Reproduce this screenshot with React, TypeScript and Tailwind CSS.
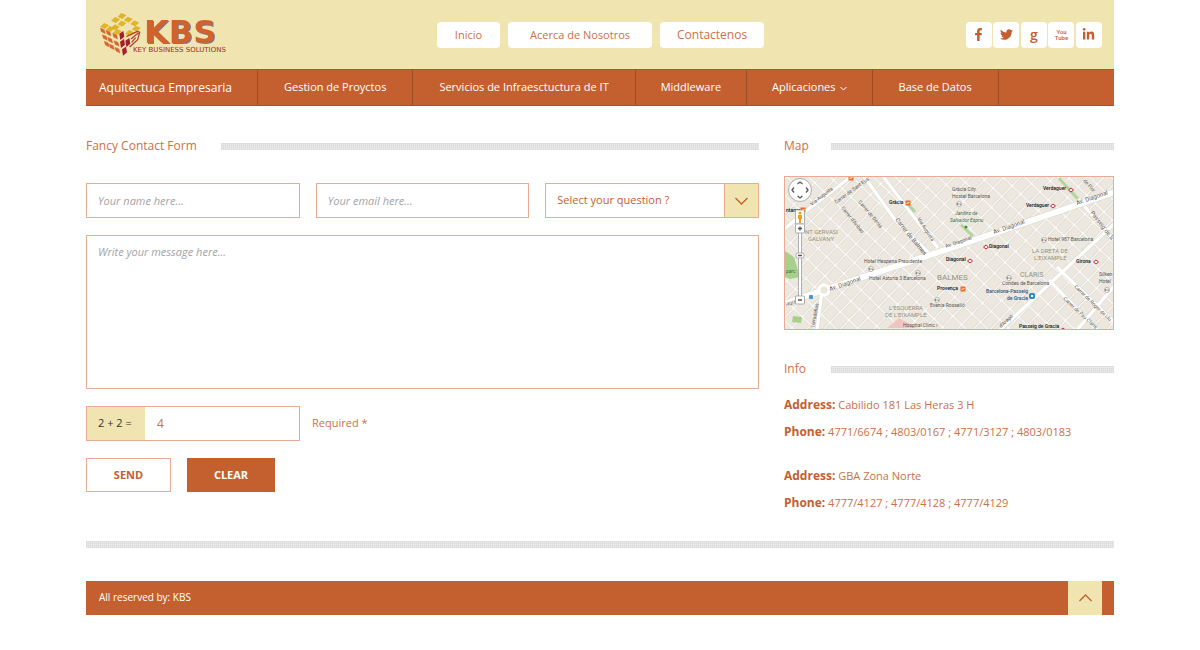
import { useState } from "react";
import type { ReactNode } from "react";
import { FaFacebookF, FaLinkedinIn, FaTwitter } from "react-icons/fa";

const topLinks = [
  { label: "Inicio", size: "px-[18px] text-[11px]" },
  { label: "Acerca de Nosotros", size: "px-[22px] text-[11px]" },
  { label: "Contactenos", size: "px-[17px] text-xs" },
];

const menu = [
  { label: "Aquitectuca Empresaria", size: "pl-[13px] pr-[25px] text-xs" },
  { label: "Gestion de Proyctos", size: "px-[26px] text-[11px]" },
  { label: "Servicios de Infraesctuctura de IT", size: "px-[26px] text-[11px]" },
  { label: "Middleware", size: "px-[25px] text-[11px]" },
  { label: "Aplicaciones", size: "px-[25px] text-[11px]", dropdown: true },
  { label: "Base de Datos", size: "px-[26px] text-[11px]" },
];

const offices = [
  { address: "Cabilido 181 Las Heras 3 H", phone: "4771/6674 ; 4803/0167 ; 4771/3127 ; 4803/0183" },
  { address: "GBA Zona Norte", phone: "4777/4127 ; 4777/4128 ; 4777/4129" },
];

const emptyForm = { name: "", email: "", question: "", message: "", answer: "4" };

export default function App() {
  return (
    <div className="mx-auto max-w-[1028px] bg-white pb-8 font-['Open_Sans',sans-serif] text-[#c4602f]">
      <Header />
      <main className="grid gap-[25px] pt-[30px] md:grid-cols-[1fr_330px]">
        <ContactForm />
        <aside>
          <SectionTitle width="w-[47px]">Map</SectionTitle>
          <div className="mt-5 border border-[#e9ab92]">
            <CityMap />
          </div>
          <div className="mt-[29px]">
            <SectionTitle width="w-[47px]">Info</SectionTitle>
          </div>
          <div className="mt-3 space-y-[17px]">
            {offices.map((office) => (
              <address key={office.address} className="text-[11px] leading-[27px] text-[#cc7047] not-italic">
                <p>
                  <b className="text-xs leading-[27px] text-[#c4602f]">Address:</b> {office.address}
                </p>
                <p>
                  <b className="text-xs leading-[27px] text-[#c4602f]">Phone:</b> {office.phone}
                </p>
              </address>
            ))}
          </div>
        </aside>
      </main>
      <div className="mt-[25px]">
        <DottedBar />
      </div>
      <footer className="mt-[33px] flex h-[34px] justify-between bg-[#c4602f] pr-3 pl-[13px]">
        <p className="text-[10px] leading-8 text-white">All reserved by: KBS</p>
        <a href="#top" aria-label="Back to top" className="flex w-[34px] items-center justify-center bg-[#f0e4b0]">
          <svg width="13" height="8" viewBox="0 0 13 8" fill="none" stroke="#c4602f" strokeWidth="1.3">
            <path d="M.5 7l6-6 6 6" />
          </svg>
        </a>
      </footer>
    </div>
  );
}

function Header() {
  return (
    <header id="top">
      <div className="flex h-[69px] items-center justify-between bg-[#f0e4b0] pr-3 pl-[13px]">
        <Logo />
        <nav className="flex gap-2">
          {topLinks.map((link) => (
            <a
              key={link.label}
              href="#"
              className={`rounded-sm bg-white leading-[26px] text-[#cc7047] ${link.size}`}
            >
              {link.label}
            </a>
          ))}
        </nav>
        <div className="flex w-[136px] justify-between">
          <Social label="Facebook">
            <FaFacebookF size={13} />
          </Social>
          <Social label="Twitter">
            <FaTwitter size={13} />
          </Social>
          <Social label="Google">
            <span className="text-sm leading-none font-semibold">g</span>
          </Social>
          <Social label="YouTube">
            <span className="text-center font-['Roboto',sans-serif] text-[6px] leading-[6px] font-medium">
              You
              <br />
              Tube
            </span>
          </Social>
          <Social label="LinkedIn">
            <FaLinkedinIn size={13} />
          </Social>
        </div>
      </div>
      <nav className="flex h-[37px] border-y border-[#bb4f1c] bg-[#c4602f] text-white">
        {menu.map((item) => (
          <a
            key={item.label}
            href="#"
            className={`flex items-center gap-1 border-r border-[#9c4d27] whitespace-nowrap ${item.size}`}
          >
            {item.label}
            {item.dropdown && (
              <svg className="mt-0.5" width="7" height="5" viewBox="0 0 7 5" fill="none" stroke="currentColor">
                <path d="M.5 1l3 3 3-3" />
              </svg>
            )}
          </a>
        ))}
      </nav>
    </header>
  );
}

function Social({ label, children }: { label: string; children: ReactNode }) {
  return (
    <a
      href="#"
      aria-label={label}
      className="flex size-[26px] items-center justify-center rounded-sm bg-white text-[#c4602f]"
    >
      {children}
    </a>
  );
}

function SectionTitle({ width, children }: { width: string; children: ReactNode }) {
  return (
    <div className="flex items-center">
      <h2 className={`shrink-0 text-xs leading-5 text-[#cc7047] ${width}`}>{children}</h2>
      <DottedBar />
    </div>
  );
}

function DottedBar() {
  return (
    <div className="h-[7px] w-full bg-[#ececec] bg-[linear-gradient(90deg,#d6d6d680_1px,transparent_1px),linear-gradient(#d6d6d680_1px,transparent_1px)] bg-size-[2px_2px]" />
  );
}

function ContactForm() {
  const [form, setForm] = useState(emptyForm);
  const field =
    "border border-[#e9ab92] bg-white px-[11px] text-[11px] text-[#c4602f] outline-none placeholder:text-[#a3a3a3] placeholder:italic";

  return (
    <section>
      <SectionTitle width="w-[135px]">Fancy Contact Form</SectionTitle>
      <form className="mt-[27px] space-y-[17px]" onSubmit={(e) => e.preventDefault()}>
        <div className="grid grid-cols-3 gap-4">
          <input
            aria-label="Your name"
            placeholder="Your name here..."
            className={`h-[35px] w-full ${field}`}
            value={form.name}
            onChange={(e) => setForm({ ...form, name: e.target.value })}
          />
          <input
            type="email"
            aria-label="Your email"
            placeholder="Your email here..."
            className={`h-[35px] w-full ${field}`}
            value={form.email}
            onChange={(e) => setForm({ ...form, email: e.target.value })}
          />
          <div className="relative">
            <select
              aria-label="Select your question"
              className={`h-[35px] w-full appearance-none ${field}`}
              value={form.question}
              onChange={(e) => setForm({ ...form, question: e.target.value })}
            >
              <option value="">Select your question ?</option>
            </select>
            <span className="pointer-events-none absolute inset-y-0 right-0 flex w-[35px] items-center justify-center border border-[#e9ab92] bg-[#f0e4b0]">
              <svg width="13" height="8" viewBox="0 0 13 8" fill="none" stroke="#c4602f" strokeWidth="1.3">
                <path d="M.5 1l6 6 6-6" />
              </svg>
            </span>
          </div>
        </div>
        <textarea
          aria-label="Your message"
          placeholder="Write your message here..."
          className={`block h-[154px] w-full resize-none py-2 ${field}`}
          value={form.message}
          onChange={(e) => setForm({ ...form, message: e.target.value })}
        />
        <div className="flex items-center gap-3">
          <div className="flex h-[35px] w-[214px] border border-[#e9ab92]">
            <label htmlFor="answer" className="flex w-[58px] shrink-0 items-center bg-[#f0e4b0] pl-[11px] text-[11px] text-[#333]">
              2 + 2 =
            </label>
            <input
              id="answer"
              className="w-full min-w-0 px-3 text-xs text-[#cc7047] outline-none"
              value={form.answer}
              onChange={(e) => setForm({ ...form, answer: e.target.value })}
            />
          </div>
          <span className="text-[11px] text-[#cc7047]">Required *</span>
        </div>
        <div className="flex gap-4">
          <button type="submit" className="h-[34px] w-[85px] border border-[#e9ab92] text-[11px] font-bold">
            SEND
          </button>
          <button
            type="button"
            className="h-[34px] w-[88px] bg-[#c4602f] text-[11px] font-bold text-white"
            onClick={() => setForm({ ...emptyForm, answer: "" })}
          >
            CLEAR
          </button>
        </div>
      </form>
    </section>
  );
}

// centers of the cube tiles, in thirds of a pixel
const yellowTiles = [
  [69, 9], [88, 20], [107, 31], [50, 21], [69, 32], [112, 47], [92, 60], [17, 39], [49, 43], [34, 48], [55, 57],
];
const orangeTiles = [
  [11, 53], [28, 60], [48, 69], [17, 73], [33, 81], [52, 91], [23, 93], [38, 101], [55, 111],
];
const redTiles = [
  [68, 66], [70, 90], [76, 113], [86, 87],
];

function Logo() {
  return (
    <svg width="136" height="44" viewBox="0 0 136 44" role="img" aria-label="KBS Key Business Solutions">
      <g transform="scale(.3333)">
        {yellowTiles.map(([x, y]) => (
          <path key={`${x}-${y}`} transform={`translate(${x} ${y})`} d="M-2-8l14 6-11 10-13-6z" fill="#e3b51f" stroke="#c79c1e" />
        ))}
        {orangeTiles.map(([x, y]) => (
          <path key={`${x}-${y}`} transform={`translate(${x} ${y})`} d="M-7-8l12 5 3 12-12-6z" fill="#d9652b" stroke="#c2562a" />
        ))}
        {redTiles.map(([x, y]) => (
          <path key={`${x}-${y}`} transform={`translate(${x} ${y})`} d="M-7-4l12-8 3 17-12 10z" fill="#a81c2c" />
        ))}
        <path d="M82 71l34-16 6 3-6 22-24 22M96 78l22-18M98 88l12-14" fill="none" stroke="#b04632" strokeWidth="4" />
      </g>
      <g fontFamily="DejaVu Sans, sans-serif" fontWeight="700">
        <text x="45" y="30" fontSize="32" fill="#d2622b" className="drop-shadow-[1px_1px_0_#75789a]">
          KBS
        </text>
        <text x="34" y="39" fontSize="7" fontWeight="400" fill="#a02a2a">KEY BUSINESS SOLUTIONS</text>
      </g>
    </svg>
  );
}

const hotels = [
  [86, 92], [133, 96], [152, 123], [174, 27], [259, 63], [224, 101], [322, 113],
];
const metroStops = [
  [286, 13], [268, 29], [201, 70], [185, 84], [311, 85], [278, 153],
];
const railStops = [
  [66, 1], [18, 33], [123, 26], [178, 112],
];
const streets =
  "M-3 54l24-20L67-1M78-2l33 46 33 32M97-2l28 37 28 36M272-2l22 25 36 41M330 46L215 153M330 108l-38 45M264 103l48 50M272 90l58 56M37 114l-5 39";

function CityMap() {
  return (
    <svg className="block w-full" viewBox="0 0 328 152" role="img" aria-label="Map of Barcelona">
      <defs>
        <pattern id="blocks" width="15" height="12" patternUnits="userSpaceOnUse" patternTransform="rotate(-46)">
          <rect width="15" height="12" fill="#ece8df" />
          <path d="M0 1.500H15M1.500 0V12" stroke="#d9d4ca" strokeWidth="2.800" />
          <path d="M0 1.500H15M1.500 0V12" stroke="#fdfcfa" strokeWidth="1.700" />
        </pattern>
        <path id="metro" d="M-2.500 0l2.500-2 2.500 2-2.500 2z" fill="#fff" stroke="#d22332" />
      </defs>
      <rect width="328" height="152" fill="url(#blocks)" />
      <path d="M0 74l9 6 6 20-10 2-5-2z" fill="#a9cf8c" />
      <path d="M8 139l9 1-1 6-9-1z" fill="#a9cf8c" />
      <path d="M114 141l18 10H102z" fill="#f0c4c1" />
      <g fill="none" strokeLinejoin="round">
        <path d={streets} stroke="#dcd7cd" strokeWidth="4.400" />
        <path d={streets} stroke="#fff" strokeWidth="3.400" />
        <path d="M-2 127l41-14L166 71 330 15" stroke="#dcd7cd" strokeWidth="7" />
        <path d="M-2 127l41-14L166 71 330 15" stroke="#fff" strokeWidth="6" />
        <path d="M274 1l19 21M176 48l12 11M122 26l8 9" stroke="#b4d39b" strokeWidth="3" />
        <circle cx="39" cy="113" r="5" fill="#ebe6dc" stroke="#fff" strokeWidth="3" />
      </g>
      {hotels.map(([x, y]) => (
        <g key={x} transform={`translate(${x} ${y})`}>
          <circle r="2.500" fill="#fff" stroke="#8b8580" strokeWidth=".6" />
          <path d="M-1.500 1V-1M-1.500 0H1.500V1" fill="none" stroke="#6f6863" strokeWidth=".7" />
        </g>
      ))}
      {metroStops.map(([x, y]) => (
        <use key={x} href="#metro" x={x} y={y} />
      ))}
      {railStops.map(([x, y]) => (
        <g key={x} transform={`translate(${x} ${y})`}>
          <rect x="-2.5" y="-2.5" width="5" height="5" fill="#f26a1b" />
          <path d="M-1 1V0H1V-1" fill="none" stroke="#fff" strokeWidth=".8" />
        </g>
      ))}
      <rect x="244" y="116" width="6" height="6" rx="2" fill="#2f86d1" />
      <path d="M246 118h2v2h-2z" fill="#fff" />
      <rect x="24" y="118" width="4" height="4" rx="1" fill="#4a95cf" />
      <circle cx="181" cy="50" r="1.5" fill="#3f8f3a" />

      <g fontFamily="Roboto, sans-serif" fontSize="5" fill="#5a5652">
        <text x="79" y="86">Hotel Hesperia Presidente</text>
        <text x="84" y="103">Hotel Astoria 3 Barcelona</text>
        <text x="145" y="130">Evenia Rosselló</text>
        <text x="118" y="150">Hospital Clinic ı</text>
        <text x="167" y="14">Gràcia City</text>
        <text x="167" y="21">Hostel Barcelona</text>
        <text x="263" y="64">Hotel 987 Barcelona</text>
        <text x="217" y="108">Condes de Barcelona</text>
        <text x="314" y="99">Silken</text>
        <text x="314" y="106">Hotel</text>
        <g fill="#3c7140" fontStyle="italic">
          <text x="170" y="38">Jardins de</text>
          <text x="165" y="45">Salvador Espriu</text>
          <text x="1" y="96">parc</text>
        </g>
        <g fill="#1f5686" fontWeight="500" textAnchor="end">
          <text x="243" y="116">Barcelona-Passeig</text>
          <text x="243" y="123">de Gracia</text>
        </g>
        <g fill="#111" fontWeight="500">
          <text x="104" y="27">Gràcia</text>
          <text x="1" y="35">ntaner</text>
          <text x="258" y="13">Verdaguer</text>
          <text x="241" y="30">Verdaguer</text>
          <text x="204" y="71">Diagonal</text>
          <text x="161" y="84">Diagonal</text>
          <text x="291" y="86">Girona</text>
          <text x="152" y="113">Provença</text>
          <text x="234" y="151">Passeig de Gracia</text>
        </g>
        <text transform="translate(27 29)rotate(-38)">Via Augusta</text>
        <text transform="translate(51 27)rotate(-36)">Carrer de Sant Eus</text>
        <text transform="translate(56 31)rotate(51)">Carrer d'Aribau</text>
        <text transform="translate(73 25)rotate(50)">Carrer de Dénia</text>
        <text fontSize="6" transform="translate(110 43)rotate(51)">Carrer de Balmes</text>
        <text transform="translate(132 42)rotate(57)">Via Augusta</text>
        <text fontSize="6" transform="translate(45 114)rotate(-19)">Av. Diagonal</text>
        <text transform="translate(161 71)rotate(-19)">Av. Diagonal</text>
        <text fontSize="6" transform="translate(209 57)rotate(-19)">Av. Diagonal</text>
        <text fontSize="6" transform="translate(292 28)rotate(-19)">Av. Diagonal</text>
        <text transform="translate(1 129)rotate(-19)">iagonal</text>
        <text fontSize="6" transform="translate(305 36)rotate(52)">Passeig de S</text>
        <text transform="translate(298 4)rotate(48)">de Flor</text>
        <text fontSize="5" transform="translate(289 110)rotate(44)">Carrer de Roger de Llu</text>
        <text fontSize="5" transform="translate(278 122)rotate(43)">Carrer de Pau Claris</text>
        <text transform="translate(216 151)rotate(-43)">d'Aragó</text>
        <text transform="translate(29 151)rotate(-79)">Tarradellas</text>
      </g>
      <g fontFamily="Roboto, sans-serif" fontSize="6" fill="#96927a">
        <text x="20" y="57">NT GERVASI</text>
        <text x="23" y="64">GALVANY</text>
        <text x="152" y="103" fontSize="8">BALMES</text>
        <text x="104" y="133">L'ESQUERRA</text>
        <text x="100" y="140">DE L'EIXAMPLE</text>
        <text x="247" y="76">LA DRETA DE</text>
        <text x="249" y="83">L'EIXAMPLE</text>
        <text x="235" y="100" fontSize="7">CLARIS</text>
      </g>

      <g stroke="#8f8f8f" strokeWidth=".7" fill="#fff">
        <circle cx="15" cy="13" r="11.5" />
        <path d="M13.5 55h3v65h-3z" />
        <rect x="10.5" y="33" width="9" height="14" rx="1" />
        <rect x="10.5" y="47" width="9" height="9" rx="1" />
        <rect x="11" y="76" width="8" height="5" rx="2" />
        <rect x="10.5" y="119" width="9" height="8" rx="1" />
      </g>
      <path
        d="M12.500 7l2.500-2 2.500 2M12.500 19l2.500 2 2.500-2M9 10.500L7 13l2 2.500M21 10.500l2 2.500-2 2.500M13 51.500h4M15 49.500v4M13 123h4M13 78.500h4"
        fill="none"
        stroke="#555"
        strokeWidth="1.300"
      />
      <path d="M13 38h4v4h-1v4h-2v-4h-1z" fill="#f0a01e" />
      <circle cx="15" cy="36" r="1.600" fill="#f0a01e" />
    </svg>
  );
}
